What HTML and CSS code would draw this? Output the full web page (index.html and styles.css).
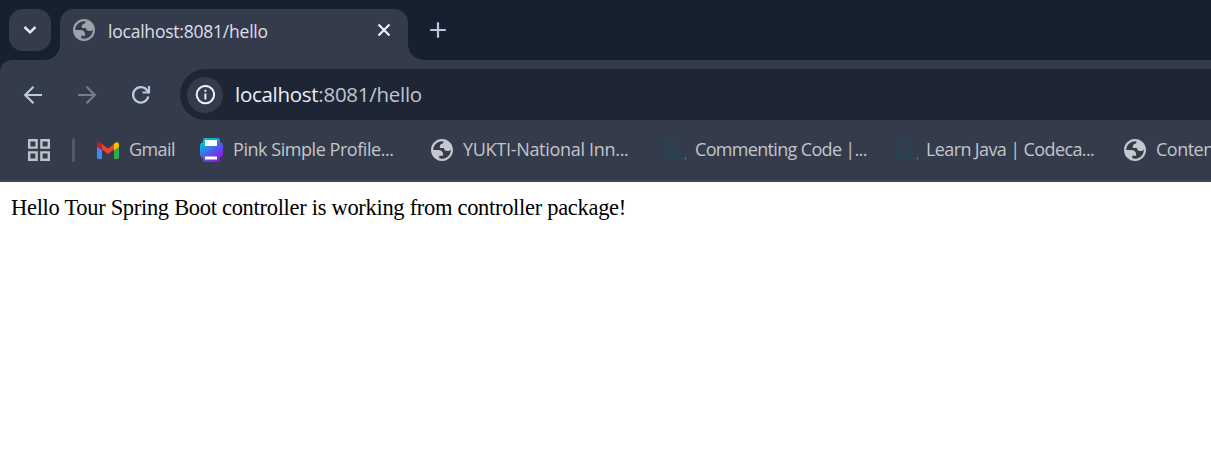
FILE: index.html
```html
<!DOCTYPE html>
<html lang="en">
<head>
<meta charset="utf-8">
<title>localhost:8081/hello</title>
<link rel="stylesheet" href="styles.css">
</head>
<body>
<svg class="defs" width="0" height="0">
  <symbol id="globe" viewBox="2 2 20 20">
    <path fill="currentColor" fill-rule="evenodd" d="M12 22C6.477 22 2 17.523 2 12S6.477 2 12 2s10 4.477 10 10-4.477 10-10 10zM4 12h4.400c3.407.022 4.922 1.730 4.543 5.127H9.488v2.470a8.004 8.004 0 0 0 10.498-8.083C19.327 12.504 18.331 13 17 13c-2.137 0-3.206-.916-3.206-2.750h-3.748c-.274-2.728.683-4.092 2.870-4.092 0-.975.327-1.597.811-1.970A8.004 8.004 0 0 0 4 12z"/>
  </symbol>
  <symbol id="code" viewBox="0 0 24 22">
    <path d="M2.500 1.500h12v18h-12zM10.500 8.800A2.800 2.800 0 1 0 10.500 13.200M17.500 19.500h5"/>
    <path class="code-tip" d="M23.500 18.500v2"/>
  </symbol>
</svg>
<div class="browser">
  <header class="tabstrip">
    <button class="tab-search" aria-label="Search tabs"><svg width="14" height="10" viewBox="0 0 14 10"><path d="M1.500 2 7 7.300 12.500 2"/></svg></button>
    <div class="tab">
      <svg class="globe tab-globe"><use href="#globe"/></svg>
      <span class="tab-title">localhost:8081/hello</span>
      <svg class="close" width="14" height="14" viewBox="0 0 14 14"><path d="m1.500 1.500 11 11M12.500 1.500l-11 11"/></svg>
    </div>
    <svg class="new-tab" width="18" height="18" viewBox="0 0 18 18"><path d="M9 1.200v15.600M1.200 9h15.600"/></svg>
  </header>
  <nav class="toolbar">
    <svg class="nav" width="20" height="20" viewBox="0 0 20 20"><path d="M19 10H2.500M10.500 1.700 2.200 10l8.300 8.300"/></svg>
    <svg class="nav disabled" width="20" height="20" viewBox="0 0 20 20"><path d="M1 10h16.500M9.500 1.700l8.300 8.300-8.300 8.300"/></svg>
    <svg class="nav" width="20" height="20" viewBox="0 0 20 20"><path d="M17.300 11.500A7.700 7.700 0 1 1 15.800 5L17.700 7.200M18 1v6.500H11.500"/></svg>
    <div class="omnibox">
      <span class="info"><svg width="20" height="20" viewBox="0 0 20 20"><circle cx="10.400" cy="9.600" r="8.700"/><path d="M10.400 8.600v6M10.400 4.800v2"/></svg></span>
      <span class="url"><b>localhost</b>:8081/hello</span>
    </div>
  </nav>
  <nav class="bookmarks">
    <svg class="apps" width="22" height="22" viewBox="0 0 22 22"><path d="M1.200 1.200h7.400v7.400H1.200zM13.400 1.200h7.400v7.400h-7.400zM1.200 13.400h7.400v7.400H1.200zM13.400 13.400h7.400v7.400h-7.400z"/></svg>
    <i class="divider"></i>
    <a class="bookmark gmail"><svg width="22" height="17" viewBox="0 0 22 17"><path fill="#4285f4" d="M0 4 5 7.500V17H1.500Q0 17 0 15.500Z"/><path fill="#34a853" d="M22 4 17 7.500V17h3.500Q22 17 22 15.500Z"/><path fill="#ea4335" d="M5 2 11 6.500 17 2V7.500L11 12 5 7.500Z"/><path fill="#c5221f" d="M0 5V2.500C0 .300 2.200-.500 4 1L5 1.800V8.200Z"/><path fill="#fbbc04" d="M22 5V2.500C22 .300 19.800-.500 18 1L17 1.800V8.200Z"/></svg><span>Gmail</span></a>
    <a class="bookmark pink"><svg width="24" height="24" viewBox="0 0 24 24"><defs><linearGradient id="print" x1="0" y1="0" x2=".65" y2="1"><stop stop-color="#00d1c8"/><stop offset=".3" stop-color="#14a9dc"/><stop offset=".58" stop-color="#4b62e8"/><stop offset="1" stop-color="#8e16ed"/></linearGradient></defs><path fill="url(#print)" d="M5 0H18.500Q20 0 20 2V4Q23 5 23 8V16Q23 19 20 20V22Q20 24 18 24H5Q3 24 3 22V20Q0 19 0 16V8Q0 5 3 4V2Q3 0 5 0Z"/><path fill="#fff" d="M5 2h12v6H5zM5 18.500h12v3H5z"/></svg><span>Pink Simple Profile...</span></a>
    <a class="bookmark yukti"><svg class="globe"><use href="#globe"/></svg><span>YUKTI-National Inn...</span></a>
    <a class="bookmark commenting"><svg class="code" width="24" height="22"><use href="#code"/></svg><span>Commenting Code |...</span></a>
    <a class="bookmark java"><svg class="code" width="24" height="22"><use href="#code"/></svg><span>Learn Java | Codeca...</span></a>
    <a class="bookmark content"><svg class="globe"><use href="#globe"/></svg><span>Conten</span></a>
  </nav>
  <main><p>Hello Tour Spring Boot controller is working from controller package!</p></main>
</div>
</body>
</html>
```
FILE: styles.css
```css
* { box-sizing: border-box; }
body { margin: 0; overflow: hidden; background: #fff; font-family: "Open Sans", "Noto Sans", sans-serif; }
svg { display: block; flex: none; }
.defs { position: absolute; }
.browser { width: 100%; height: 457px; overflow: hidden; background: #17202e; }
.tabstrip { height: 60px; padding: 9px 0 0 9px; display: flex; align-items: flex-start; }
.tab-search { width: 42px; height: 42px; padding: 0; border: 0; border-radius: 14px; background: #343c4c; display: flex; align-items: center; justify-content: center; }
.tab-search path { fill: none; stroke: #e6e8ef; stroke-width: 2.500; }
.tab { position: relative; width: 348px; height: 51px; margin-left: 9px; padding: 0 17px 8px 13px; background: #343c4c; border-radius: 14px 14px 0 0; display: flex; align-items: center; }
.tab::before, .tab::after { content: ""; position: absolute; bottom: 0; width: 15px; height: 15px; }
.tab::before { right: 100%; background: radial-gradient(circle at 0 0, transparent 14.500px, #343c4c 15px); }
.tab::after { left: 100%; background: radial-gradient(circle at 100% 0, transparent 14.500px, #343c4c 15px); }
.globe { width: 22px; height: 22px; color: #c6c8cd; }
.tab-globe { margin-bottom: 2px; color: #9da2a8; }
.tab-title { margin-left: 13px; font-size: 17.500px; letter-spacing: -.22px; color: #dedfe9; white-space: nowrap; }
.close { margin-left: auto; margin-bottom: 1px; }
.close path { stroke: #eceef4; stroke-width: 2.200; }
.new-tab { margin: 12px 0 0 21px; }
.new-tab path { stroke: #bbc6df; stroke-width: 2.200; }
.toolbar { height: 70px; padding: 0 0 1px 23px; display: flex; align-items: center; background: #343c4c; border-radius: 12px 0 0 0; }
.nav { margin-right: 34px; }
.nav path { fill: none; stroke: #bdc9de; stroke-width: 2.200; }
.nav.disabled path { stroke: #767c89; }
.omnibox { flex: 1; height: 51px; margin-left: -5px; padding-left: 7px; display: flex; align-items: center; background: #1e2636; border-radius: 26px 0 0 26px; }
.info { width: 36px; height: 36px; border-radius: 50%; background: #343c4c; display: flex; align-items: center; justify-content: center; }
.info svg { fill: none; stroke: #eceef4; stroke-width: 2; }
.url { margin-left: 12px; padding-bottom: 2px; font-size: 20.500px; letter-spacing: -.28px; color: #c0c5cf; white-space: nowrap; }
.url b { font-weight: 400; color: #eceef5; }
.bookmarks { height: 52px; padding: 0 0 10px 28px; display: flex; align-items: center; background: #343c4c; border-bottom: 2px solid #42484f; white-space: nowrap; overflow: hidden; }
.apps path { fill: none; stroke: #c0c2ca; stroke-width: 2.400; }
.divider { flex: none; width: 3px; height: 24px; margin-left: 22px; border-radius: 2px; background: #4f586a; }
.bookmark { flex: none; display: flex; align-items: center; color: #c3c5ca; font-size: 18px; }
.bookmark span { padding-bottom: 2px; }
.gmail { width: 103px; margin-left: 22px; gap: 10px; letter-spacing: -.6px; }
.pink { width: 231px; gap: 9px; letter-spacing: -.45px; }
.yukti { width: 231px; gap: 10px; letter-spacing: -.3px; }
.commenting { width: 232px; gap: 9px; letter-spacing: -.67px; }
.java { width: 230px; gap: 8px; letter-spacing: -.62px; }
.content { gap: 10px; letter-spacing: -.5px; }
.code { fill: none; stroke: #234357; stroke-width: 1.200; }
.code-tip { stroke: #6d8390; }
main { height: 275px; padding: 10px 11px; background: #fff; }
p { margin: 0; font: 22.500px/32px "Liberation Serif", serif; letter-spacing: -.305px; color: #000; white-space: nowrap; }
```
